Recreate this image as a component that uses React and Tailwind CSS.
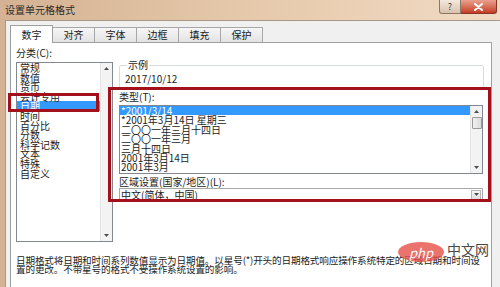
import React from "react";

const categories = ["常规", "数值", "货币", "会计专用", "日期", "时间", "百分比", "分数", "科学记数", "文本", "特殊", "自定义"];
const types = [
  "*2001/3/14",
  "*2001年3月14日 星期三",
  "二〇〇一年三月十四日",
  "二〇〇一年三月",
  "三月十四日",
  "2001年3月14日",
  "2001年3月",
];
const tabs = ["数字", "对齐", "字体", "边框", "填充", "保护"];

function Arrow({ down = false }) {
  return (
    <svg width="5" height="3" viewBox="0 0 5 3" className="block">
      {down ? <path d="M0 0h5L2.5 3z" fill="#4d4d4d" /> : <path d="M0 3h5L2.5 0z" fill="#4d4d4d" />}
    </svg>
  );
}

function ScrollBar({ thumb = false }) {
  return (
    <div className="flex w-[12px] flex-col items-center justify-between border-l border-[#e4e4e4] bg-[#f3f3f3] py-[4px]">
      <div className="flex w-full flex-col items-center">
        <Arrow />
        {thumb && (
          <div className="mt-[4px] h-[12px] w-[10px] rounded-[1px] border border-[#9a9a9a] bg-gradient-to-r from-[#f0f0f0] to-[#dcdcdc]" />
        )}
      </div>
      <Arrow down />
    </div>
  );
}

export default function App() {
  return (
    <div className="relative flex h-[287px] w-[500px] flex-col overflow-hidden bg-gradient-to-r from-[#d4b293] via-[#e6c9ab] to-[#f1dac4] font-['Noto_Sans_CJK_SC',sans-serif] text-[10px] text-[#1b1b1b]">
      {/* title bar */}
      <div className="flex h-[20px] shrink-0 items-start justify-between">
        <span className="ml-[5px] mt-[4px] leading-[12px] text-[#2a2a2a]">设置单元格格式</span>
        <div className="mr-[3px] flex">
          <div className="flex h-[14px] w-[22px] items-center justify-center rounded-bl-[3px] border border-t-0 border-[#8c7866] bg-gradient-to-b from-[#f5e9de] to-[#d9c2ad] text-[9px] leading-none text-[#3b3b3b]">
            ?
          </div>
          <div className="flex h-[14px] w-[36px] items-center justify-center rounded-br-[3px] border border-l-0 border-t-0 border-[#8a3424] bg-gradient-to-b from-[#e9a08d] to-[#c33a22]">
            <svg width="9" height="8" viewBox="0 0 9 8">
              <path d="M1 1l7 6M8 1L1 7" stroke="#fff" strokeWidth="2" strokeLinecap="round" />
            </svg>
          </div>
        </div>
      </div>

      {/* dialog body */}
      <div className="ml-[5px] flex-1 border-l border-t border-[#a99886] bg-[#f0f0f0] pl-[4px] pt-[4px]">
        <div className="flex h-[17px] items-end">
          {tabs.map((t, i) =>
            i === 0 ? (
              <div
                key={t}
                className="relative z-10 -mb-px flex h-[18px] w-[43px] items-center justify-center border border-b-0 border-[#a0a0a0] bg-white leading-none"
              >
                {t}
              </div>
            ) : (
              <div
                key={t}
                className="-ml-px flex h-[15px] w-[43px] items-center justify-center border border-b-0 border-[#a7a7a7] bg-gradient-to-b from-[#f6f6f6] to-[#e3e3e3] leading-none"
              >
                {t}
              </div>
            )
          )}
        </div>

        <div className="mr-[8px] h-[260px] border border-[#a0a0a0] bg-white">
          <div className="flex">
            {/* category column */}
            <div className="flex flex-col pl-[5px] pt-[4px]">
              <span className="h-[12px] leading-[12px]">分类(C):</span>
              <div className="mt-[3px] flex h-[180px] w-[97px] border border-[#828790] bg-white">
                <div className="flex-1">
                  {categories.map((c) => (
                    <div
                      key={c}
                      className={
                        c === "日期"
                          ? "h-[9.6px] bg-[#3399ff] pl-[3px] leading-[9.6px] text-white"
                          : "h-[9.6px] pl-[3px] leading-[9.6px]"
                      }
                    >
                      {c}
                    </div>
                  ))}
                </div>
                <ScrollBar />
              </div>
            </div>

            {/* right column */}
            <div className="ml-[6px] flex w-[365px] flex-col pt-[17px]">
              <fieldset className="h-[28px] rounded-[2px] border border-[#d5dbe0] pl-[5px]">
                <legend className="ml-[2px] px-[1px] leading-[10px]">示例</legend>
                <div className="mt-[4px] leading-[10px]">2017/10/12</div>
              </fieldset>

              <span className="mt-[3px] h-[12px] leading-[12px]">类型(T):</span>
              <div className="mt-[2px] flex h-[69px] w-[364px] border border-[#828790] bg-white">
                <div className="flex-1">
                  {types.map((t, i) => (
                    <div
                      key={t}
                      className={
                        i === 0
                          ? "h-[9.4px] whitespace-pre bg-[#3399ff] pl-[1px] leading-[9.4px] text-white"
                          : "h-[9.4px] whitespace-pre pl-[1px] leading-[9.4px]"
                      }
                    >
                      {t}
                    </div>
                  ))}
                </div>
                <ScrollBar thumb />
              </div>

              <span className="mt-[2px] h-[12px] leading-[12px]">区域设置(国家/地区)(L):</span>
              <div className="flex h-[13px] w-[364px] items-center border border-[#a9a9a9] bg-white">
                <span className="flex-1 pl-[1px] leading-[10px]">中文(简体，中国)</span>
                <div className="mr-[1px] flex h-[10px] w-[10px] items-center justify-center border border-[#b5b5b5] bg-gradient-to-b from-[#f7f7f7] to-[#dedede]">
                  <Arrow down />
                </div>
              </div>
            </div>
          </div>

          <div className="mt-[14px] whitespace-nowrap pl-[5px] text-[9.6px] leading-[9px] tracking-[-0.15px]">
            <div>日期格式将日期和时间系列数值显示为日期值。以星号(*)开头的日期格式响应操作系统特定的区域日期和时间设</div>
            <div>置的更改。不带星号的格式不受操作系统设置的影响。</div>
          </div>
        </div>
      </div>

      {/* annotation boxes */}
      <div className="absolute left-[8px] top-[93px] h-[19px] w-[91px] border-[3px] border-[#a3101a]" />
      <div className="absolute left-[108px] top-[87px] h-[115px] w-[383px] border-[3px] border-[#a3101a]" />

      {/* watermark */}
      <div className="absolute left-[398px] top-[242px] flex h-[20px] w-[46px] items-center justify-center rounded-[50%] bg-[#e5504a]/80 text-[13px] italic leading-none text-white">
        php
      </div>
      <div className="absolute left-[447px] top-[241px] text-[14px] leading-[16px] text-[#4a4a4a]">中文网</div>
    </div>
  );
}
